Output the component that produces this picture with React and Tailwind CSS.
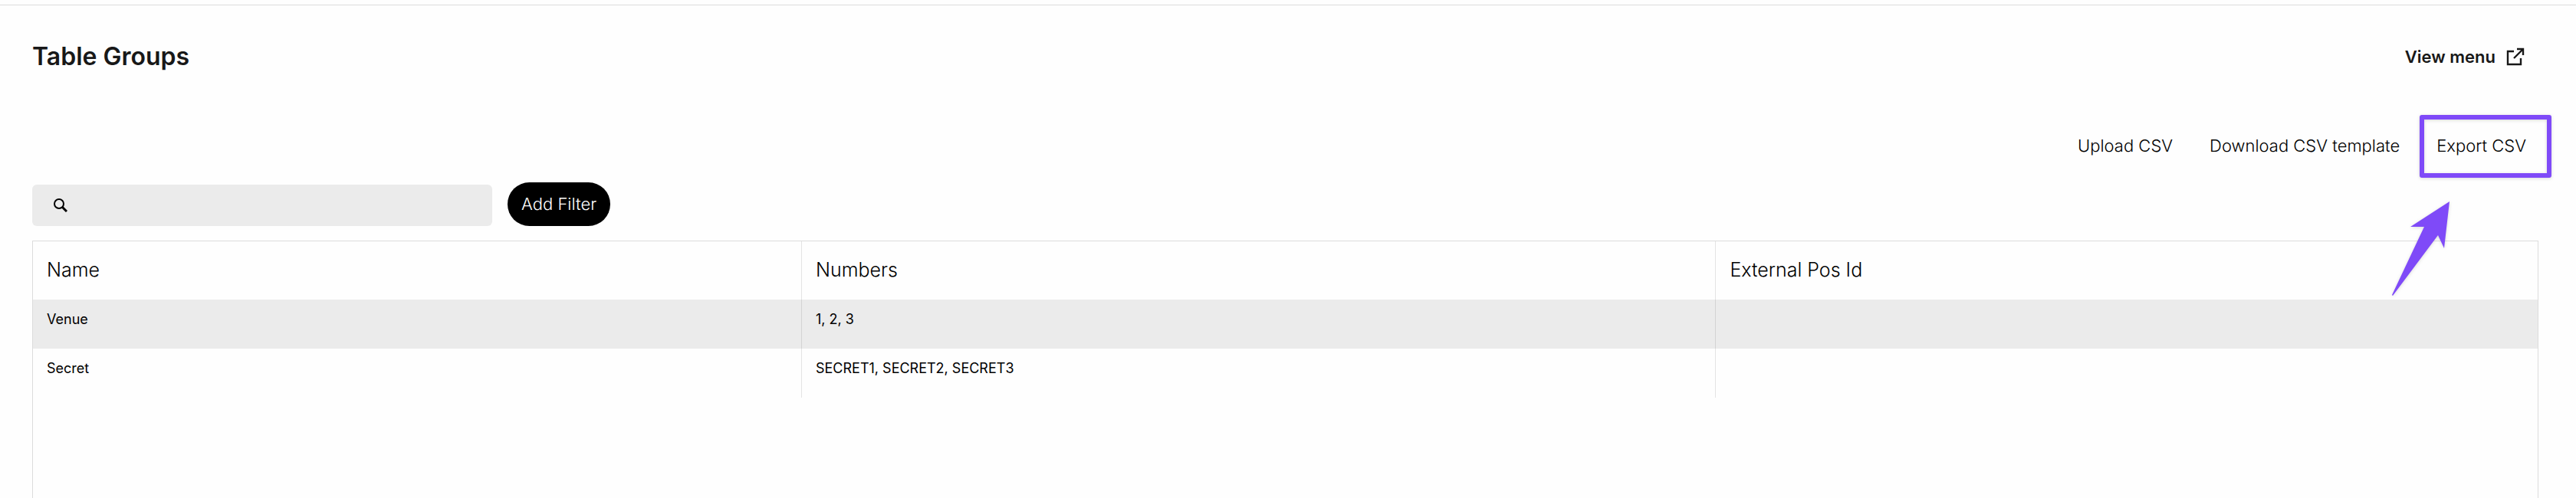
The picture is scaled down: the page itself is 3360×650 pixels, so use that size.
import React from "react";

const actions = ["Upload CSV", "Download CSV template", "Export CSV"];

const columns = [
  { key: "name", label: "Name", width: "w-[30.7%]" },
  { key: "numbers", label: "Numbers", width: "w-[36.5%]" },
  { key: "posId", label: "External Pos Id", width: "" },
];

const rows = [
  { name: "Venue", numbers: "1, 2, 3", posId: "" },
  { name: "Secret", numbers: "SECRET1, SECRET2, SECRET3", posId: "" },
];

const ExternalIcon = () => (
  <svg viewBox="0 0 24 24" className="size-6" fill="none" stroke="currentColor" strokeWidth="2.4" aria-hidden="true">
    <path d="M10 5H2v17h17v-8" />
    <path d="M14 2h8v8M22 2L10 14" />
  </svg>
);

const SearchIcon = () => (
  <svg viewBox="0 0 18 18" className="size-[18px] shrink-0" fill="none" stroke="currentColor" strokeWidth="2" aria-hidden="true">
    <circle cx="7" cy="7" r="6" />
    <path d="M11 11l6 6" strokeWidth="3" />
  </svg>
);

// Purple frame and arrow pointing at the highlighted action
const Callout = () => (
  <>
    <span className="pointer-events-none absolute -left-[22px] -right-[33px] -top-[24px] -bottom-[26px] rounded-[3px] border-[6px] border-[#7f4af8] drop-shadow-sm" />
    <svg viewBox="0 0 78 126" className="pointer-events-none absolute -left-[59px] top-[88px] h-[126px] w-[78px] drop-shadow-sm" aria-hidden="true">
      <path d="M76 1L25 34h18L1 123l1 1 59-79 8 17z" fill="#7f4af8" />
    </svg>
  </>
);

const App = () => {
  return (
    <div className="flex min-h-screen flex-col bg-[#fefefe] pt-[6px] font-['Inter',sans-serif] text-black">
      <main className="flex flex-1 flex-col border-t border-[#dcdcdc] pl-[42px] pr-[49px] pt-[47px]">
        <header className="flex h-10 items-center justify-between pr-[18px] text-[#181818]">
          <h1 className="text-[32px] leading-10 font-semibold">Table Groups</h1>
          <a href="#menu" className="flex items-center gap-[14px] text-[22px] font-semibold">
            View menu
            <ExternalIcon />
          </a>
        </header>

        <div className="mt-20 flex justify-end gap-12 pr-4">
          {actions.map((action) => (
            <button key={action} type="button" className="relative text-[22px] leading-8 font-light">
              {action}
              {action === "Export CSV" && <Callout />}
            </button>
          ))}
        </div>

        <div className="mt-8 flex items-end gap-5">
          <label className="flex h-[54px] w-[600px] items-center gap-4 rounded-md bg-[#ebebeb] px-7">
            <SearchIcon />
            <input type="search" aria-label="Search table groups" className="w-full bg-transparent text-[22px] outline-none" />
          </label>
          <button type="button" className="h-[57px] rounded-full bg-black px-[18px] text-[22px] font-light text-white">
            Add Filter
          </button>
        </div>

        <section className="mt-[19px] flex-1 border border-b-0 border-[#dcdcdc]">
          <table className="w-full table-fixed border-separate border-spacing-0 text-left">
            <thead>
              <tr>
                {columns.map((col) => (
                  <th
                    key={col.key}
                    scope="col"
                    className={`${col.width} h-[76px] border-r border-black/10 px-[18px] text-[25px] font-light last:border-r-0`}
                  >
                    {col.label}
                  </th>
                ))}
              </tr>
            </thead>
            <tbody>
              {rows.map((row) => (
                <tr key={row.name} className="odd:bg-[#ebebeb]">
                  {columns.map((col) => (
                    <td
                      key={col.key}
                      className="h-16 border-r border-black/10 px-[18px] pt-3 align-top text-[18px] leading-7 last:border-r-0"
                    >
                      {row[col.key]}
                    </td>
                  ))}
                </tr>
              ))}
            </tbody>
          </table>
        </section>
      </main>
    </div>
  );
};

export default App;
